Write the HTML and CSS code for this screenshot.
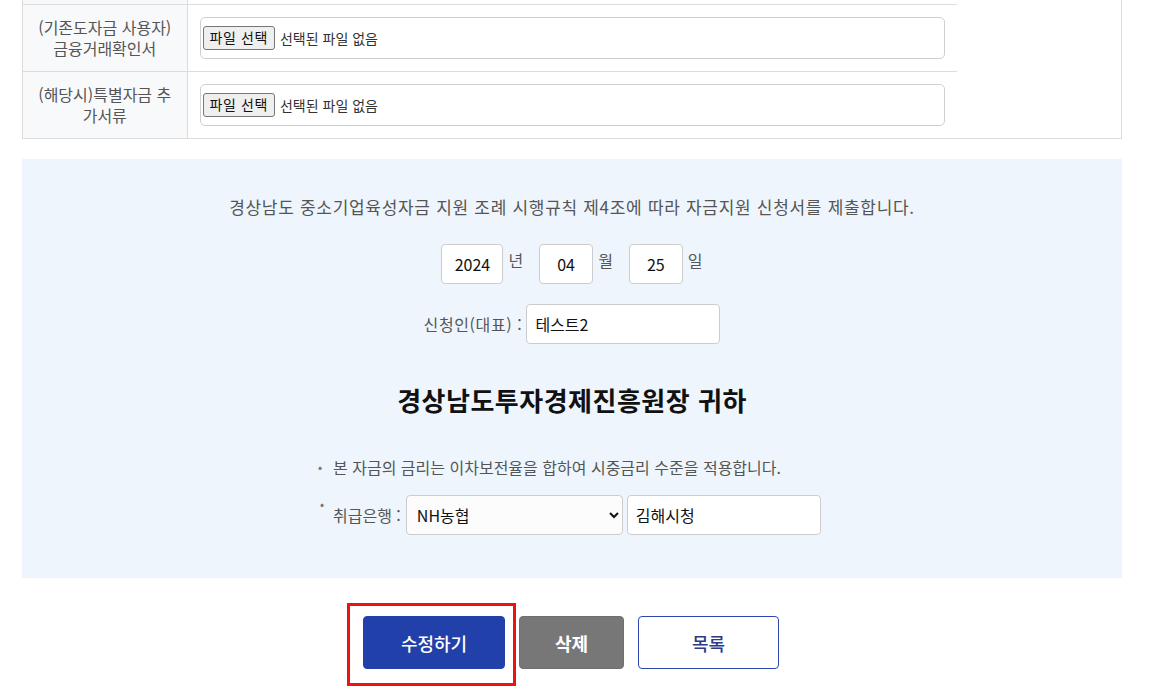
FILE: index.html
```html
<!DOCTYPE html>
<html lang="ko">
<head>
<meta charset="utf-8">
<link rel="stylesheet" href="styles.css">
</head>
<body>
<div class="frame">
  <table class="files">
    <tr class="row-top"><th></th><td></td></tr>
    <tr>
      <th>(기존도자금 사용자)<br>금융거래확인서</th>
      <td><div class="filebox"><span class="filebtn">파일 선택</span><span class="filetxt">선택된 파일 없음</span></div></td>
    </tr>
    <tr>
      <th>(해당시)특별자금 추<br>가서류</th>
      <td><div class="filebox"><span class="filebtn">파일 선택</span><span class="filetxt">선택된 파일 없음</span></div></td>
    </tr>
  </table>
</div>

<section class="pledge">
  <p class="intro">경상남도 중소기업육성자금 지원 조례 시행규칙 제4조에 따라 자금지원 신청서를 제출합니다.</p>
  <div class="date-row">
    <input class="box w-year" type="text" value="2024"><span class="unit">년</span>
    <input class="box w-md" type="text" value="04"><span class="unit">월</span>
    <input class="box w-md" type="text" value="25"><span class="unit last">일</span>
  </div>
  <div class="applicant-row">
    <span class="lbl">신청인(대표) :</span>
    <input class="box w-name" type="text" value="테스트2">
  </div>
  <h2 class="to">경상남도투자경제진흥원장 귀하</h2>
  <div class="notes">
    <div class="note"><span class="dot">•</span><span>본 자금의 금리는 이차보전율을 합하여 시중금리 수준을 적용합니다.</span></div>
    <div class="note bank"><span class="dot up">•</span><span class="lbl">취급은행 :</span>
      <select class="box sel"><option>NH농협</option></select>
      <input class="box w-branch" type="text" value="김해시청">
    </div>
  </div>
</section>

<div class="actions">
  <div class="primary-wrap">
    <button class="btn btn-blue">수정하기</button>
    <span class="mark"></span>
  </div>
  <button class="btn btn-gray">삭제</button>
  <button class="btn btn-line">목록</button>
</div>
</body>
</html>
```
FILE: styles.css
```css
* { box-sizing: border-box; }
html, body { margin: 0; padding: 0; background: #fff; }
body {
  font-family: "Noto Sans CJK KR", "Noto Sans", sans-serif;
  color: #555;
  width: 1150px;
  min-height: 691px;
  padding-bottom: 30px;
}

.frame {
  margin-left: 22px;
  width: 1100px;
  border: 1px solid #dcdcdc;
  border-top: 0;
}
.files {
  border-collapse: collapse;
  width: 934px;
}
.files th {
  width: 164px;
  background: #f8f9fb;
  border-right: 1px solid #dcdcdc;
  font-weight: 400;
  font-size: 16px;
  line-height: 21px;
  color: #555;
  text-align: center;
  padding: 0;
}
.files td { padding: 0 12px 0 12px; }
.files tr { height: 67px; border-bottom: 1px solid #dcdcdc; }
.files tr:last-child { border-bottom: 0; }
.files tr.row-top { height: 4px; }
.files tr.row-top th, .files tr.row-top td { height: 4px; }

.filebox {
  height: 42px;
  border: 1px solid #cfcfcf;
  border-radius: 5px;
  display: flex;
  align-items: center;
  padding-left: 2px;
  font-size: 14px;
  color: #333;
}
.filebtn {
  display: inline-block;
  height: 24px;
  line-height: 21px;
  padding: 0 6px;
  background: #efefef;
  border: 1px solid #767676;
  border-radius: 3px;
  color: #111;
  font-size: 14px;
  letter-spacing: 0.6px;
}
.filetxt { margin-left: 5px; }

.pledge {
  margin: 20px 0 0 22px;
  width: 1100px;
  height: 419px;
  background: #eef5fd;
  text-align: center;
  padding-top: 36px;
}
.intro {
  margin: 0;
  font-size: 17px;
  letter-spacing: 0.7px;
  line-height: 24px;
  color: #555;
}
.box {
  height: 40px;
  border: 1px solid #cccccc;
  border-radius: 4px;
  background: #fff;
  font-family: inherit;
  font-size: 16px;
  color: #111;
  padding: 0 8px;
  vertical-align: middle;
  outline: none;
}
.date-row {
  margin-top: 25px;
  display: flex;
  justify-content: center;
  align-items: center;
  height: 40px;
}
.date-row .box { text-align: center; padding: 0; }
.w-year { width: 62px; }
.w-md { width: 54px; }
.unit {
  font-size: 16px;
  margin: -8px 16px 0 5px;
  color: #555;
}
.unit.last { margin-right: 0; }

.applicant-row {
  margin-top: 20px;
  display: flex;
  justify-content: center;
  align-items: center;
}
.lbl { font-size: 16px; color: #555; }
.applicant-row .lbl { margin-right: 4px; letter-spacing: 0.6px; }
.w-name { width: 194px; }

.to {
  margin: 39px 0 0;
  font-size: 26px;
  letter-spacing: 0.5px;
  line-height: 34px;
  font-weight: 700;
  color: #111;
}

.notes {
  margin: 39px 0 0 296px;
  text-align: left;
}
.note {
  display: flex;
  align-items: center;
  font-size: 16px;
  line-height: 22px;
  color: #555;
}
.dot { width: 15px; font-size: 12px; color: #777; }
.note.bank { margin-top: 17px; }
.dot.up { align-self: flex-start; margin-top: -2px; padding-left: 2px; width: 15px; }
.bank .lbl { margin-right: 5px; }
.sel {
  width: 217px;
  padding: 0 4px 0 6px;
  background: #fcfcfd;
}
.w-branch { width: 194px; margin-left: 4px; }

.actions {
  margin-top: 38px;
  display: flex;
  justify-content: center;
  gap: 14px;
  padding-right: 8px;
}
.primary-wrap { position: relative; }
.btn {
  height: 53px;
  border-radius: 4px;
  font-family: inherit;
  font-size: 18px;
  cursor: pointer;
  display: block;
}
.btn-blue {
  width: 142px;
  background: #2140a9;
  border: 1px solid #2140a9;
  color: #fff;
  font-weight: 500;
}
.btn-gray {
  width: 105px;
  background: #777777;
  border: 1px solid #6f6f6f;
  color: #fff;
  font-weight: 700;
}
.btn-line {
  width: 141px;
  background: #fff;
  border: 1px solid #2c47ad;
  color: #2b3a8a;
  font-weight: 500;
}
.mark {
  position: absolute;
  left: -16px;
  top: -13px;
  width: 169px;
  height: 83px;
  border: 3px solid #ee1111;
  pointer-events: none;
}
```
